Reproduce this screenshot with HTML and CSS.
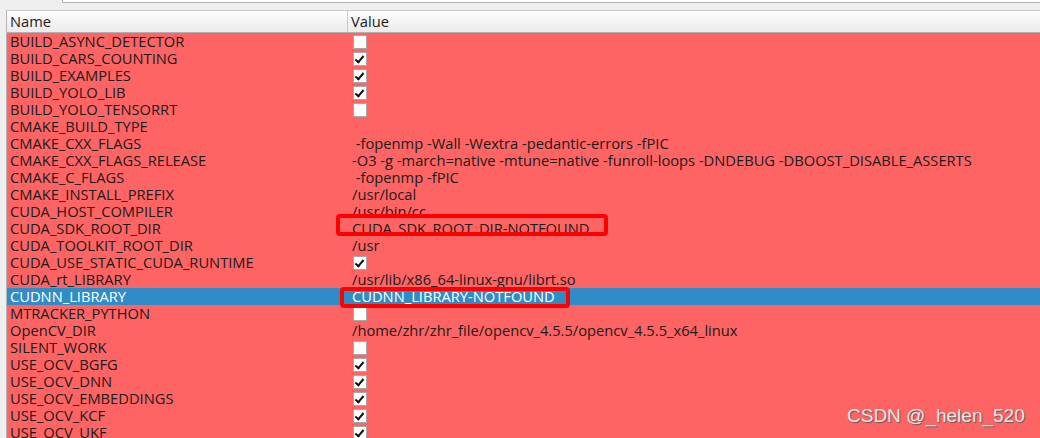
FILE: index.html
```html
<!DOCTYPE html>
<html>
<head>
<meta charset="utf-8">
<link rel="stylesheet" href="styles.css">
</head>
<body>
<div class="top">
  <div class="search"></div>
</div>
<div class="table">
  <div class="head">
    <div class="hcell name">Name</div>
    <div class="hcell value">Value</div>
  </div>
  <div class="rows">
    <div class="row"><div class="c n">BUILD_ASYNC_DETECTOR</div><div class="c v"><span class="cb"></span></div></div>
    <div class="row"><div class="c n">BUILD_CARS_COUNTING</div><div class="c v"><span class="cb on"></span></div></div>
    <div class="row"><div class="c n">BUILD_EXAMPLES</div><div class="c v"><span class="cb on"></span></div></div>
    <div class="row"><div class="c n">BUILD_YOLO_LIB</div><div class="c v"><span class="cb on"></span></div></div>
    <div class="row"><div class="c n">BUILD_YOLO_TENSORRT</div><div class="c v"><span class="cb"></span></div></div>
    <div class="row"><div class="c n">CMAKE_BUILD_TYPE</div><div class="c v"></div></div>
    <div class="row"><div class="c n">CMAKE_CXX_FLAGS</div><div class="c v"> -fopenmp -Wall -Wextra -pedantic-errors -fPIC</div></div>
    <div class="row"><div class="c n">CMAKE_CXX_FLAGS_RELEASE</div><div class="c v">-O3 -g -march=native -mtune=native -funroll-loops -DNDEBUG -DBOOST_DISABLE_ASSERTS</div></div>
    <div class="row"><div class="c n">CMAKE_C_FLAGS</div><div class="c v"> -fopenmp -fPIC</div></div>
    <div class="row"><div class="c n">CMAKE_INSTALL_PREFIX</div><div class="c v">/usr/local</div></div>
    <div class="row"><div class="c n">CUDA_HOST_COMPILER</div><div class="c v">/usr/bin/cc</div></div>
    <div class="row"><div class="c n">CUDA_SDK_ROOT_DIR</div><div class="c v">CUDA_SDK_ROOT_DIR-NOTFOUND</div></div>
    <div class="row"><div class="c n">CUDA_TOOLKIT_ROOT_DIR</div><div class="c v">/usr</div></div>
    <div class="row"><div class="c n">CUDA_USE_STATIC_CUDA_RUNTIME</div><div class="c v"><span class="cb on"></span></div></div>
    <div class="row"><div class="c n">CUDA_rt_LIBRARY</div><div class="c v">/usr/lib/x86_64-linux-gnu/librt.so</div></div>
    <div class="row sel"><div class="c n">CUDNN_LIBRARY</div><div class="c v">CUDNN_LIBRARY-NOTFOUND</div></div>
    <div class="row"><div class="c n">MTRACKER_PYTHON</div><div class="c v"><span class="cb"></span></div></div>
    <div class="row"><div class="c n">OpenCV_DIR</div><div class="c v">/home/zhr/zhr_file/opencv_4.5.5/opencv_4.5.5_x64_linux</div></div>
    <div class="row"><div class="c n">SILENT_WORK</div><div class="c v"><span class="cb"></span></div></div>
    <div class="row"><div class="c n">USE_OCV_BGFG</div><div class="c v"><span class="cb on"></span></div></div>
    <div class="row"><div class="c n">USE_OCV_DNN</div><div class="c v"><span class="cb on"></span></div></div>
    <div class="row"><div class="c n">USE_OCV_EMBEDDINGS</div><div class="c v"><span class="cb on"></span></div></div>
    <div class="row"><div class="c n">USE_OCV_KCF</div><div class="c v"><span class="cb on"></span></div></div>
    <div class="row"><div class="c n">USE_OCV_UKF</div><div class="c v"><span class="cb on"></span></div></div>
  </div>
</div>
<div class="mark mark1"></div>
<div class="mark mark2"></div>
<div class="watermark">CSDN @_helen_520</div>
</body>
</html>
```
FILE: styles.css
```css
html, body {
  margin: 0;
  padding: 0;
  width: 1040px;
  height: 438px;
  overflow: hidden;
  background: #efefef;
  font-family: "Open Sans", "DejaVu Sans", sans-serif;
  font-size: 14.7px;
  color: #1a1a1a;
}
.top {
  height: 10px;
  padding-left: 62px;
}
.search {
  height: 2px;
  background: #ffffff;
  border-left: 1px solid #b4b4b4;
  border-bottom: 1px solid #b4b4b4;
}
.table {
  margin-left: 6px;
  border-left: 1px solid #b4b4b4;
  border-top: 1px solid #c8c8c8;
}
.head {
  display: grid;
  grid-template-columns: 341px 1fr;
  height: 21px;
  background: linear-gradient(#fdfdfd, #ebebeb);
  border-bottom: 1px solid #b0b0b0;
}
.hcell {
  line-height: 21px;
  padding-left: 3px;
}
.hcell.name {
  border-right: 1px solid #c8c8c8;
}
.rows {
  background: #ff6464;
}
.row {
  display: grid;
  grid-template-columns: 341px 1fr;
  height: 17px;
  line-height: 17px;
}
.c {
  white-space: pre;
}
.c.n { padding-left: 3px; }
.c.v { padding-left: 4px; display: flex; align-items: center; }
.row.sel {
  background: #308cc6;
  color: #ffffff;
}
.cb {
  display: inline-block;
  box-sizing: border-box;
  width: 14px;
  height: 14px;
  background: #ffffff;
  border: 1px solid #a8a8a8;
  position: relative;
  margin-left: 1px;
}
.cb.on::after {
  content: "";
  position: absolute;
  left: 3px;
  top: 1px;
  width: 3px;
  height: 7px;
  border-right: 2px solid #111;
  border-bottom: 2px solid #111;
  transform: rotate(40deg);
  transform-origin: center;
}
.mark {
  position: absolute;
  border: 4px solid #ff0000;
  border-radius: 4px;
  box-sizing: border-box;
}
.mark1 { left: 336px; top: 214px; width: 272px; height: 22px; }
.mark2 { left: 340px; top: 287px; width: 230px; height: 21px; }
.watermark {
  position: absolute;
  left: 847px;
  top: 405px;
  font-family: "Liberation Sans", Arial, sans-serif;
  font-size: 19px;
  color: #e6e6e6;
  text-shadow: 1px 1px 1px #5a5a5a;
}
```
